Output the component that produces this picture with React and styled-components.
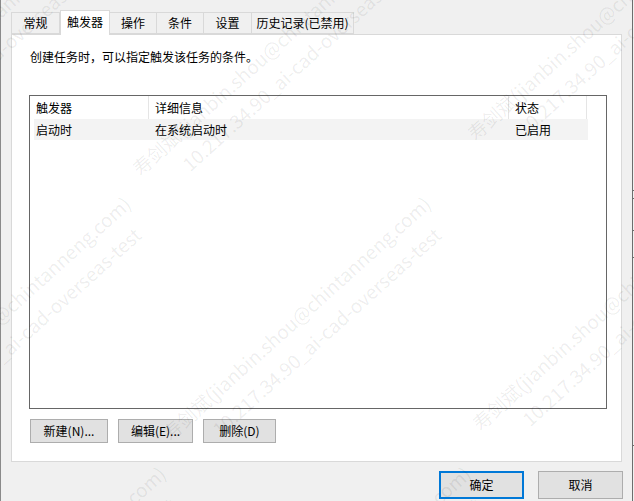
import React from "react";
import styled, { createGlobalStyle } from "styled-components";

const Global = createGlobalStyle`
  html, body { margin: 0; padding: 0; background: #f0f0f0; }
  body { font-family: "Noto Sans CJK SC", "Microsoft YaHei", sans-serif; font-size: 12px; color: #000; }
`;

const Window = styled.div`
  position: relative;
  width: 634px;
  height: 501px;
  overflow: hidden;
  background: #f0f0f0;
  box-sizing: border-box;
  display: grid;
  grid-template-columns: 1px 1fr 1px 1px;
`;

const EdgeLine = styled.div`
  background: ${(p) => p.color || "#7a7a7a"};
`;

const Dialog = styled.div`
  display: flex;
  flex-direction: column;
  padding: 10px 0 0 10px;
  width: 630px;
  box-sizing: border-box;
`;

const TabStrip = styled.div`
  display: flex;
  align-items: flex-end;
  height: 24px;
  position: relative;
  z-index: 2;
`;

const Tab = styled.div`
  width: ${(p) => p.w}px;
  height: ${(p) => (p.active ? 25 : 22)}px;
  margin-bottom: ${(p) => (p.active ? -1 : 0)}px;
  box-sizing: border-box;
  border: 1px solid #d9d9d9;
  border-bottom: ${(p) => (p.active ? "none" : "1px solid #d9d9d9")};
  border-left: ${(p) => (p.first || p.active ? "1px solid #d9d9d9" : "none")};
  background: ${(p) => (p.active ? "#ffffff" : "#f0f0f0")};
  display: flex;
  align-items: center;
  justify-content: center;
  padding-bottom: ${(p) => (p.active ? 3 : 0)}px;
  white-space: nowrap;
  line-height: 1;
`;

const Panel = styled.div`
  width: 611px;
  height: 428px;
  box-sizing: border-box;
  background: #ffffff;
  border: 1px solid #d9d9d9;
  display: flex;
  flex-direction: column;
  padding: 0 0 0 17px;
`;

const Description = styled.div`
  margin-top: 14px;
  height: 16px;
  line-height: 16px;
  margin-left: 1px;
`;

const ListBox = styled.div`
  margin-top: 30px;
  width: 578px;
  height: 314px;
  box-sizing: border-box;
  border: 1px solid #666666;
  display: flex;
  flex-direction: column;
`;

const HeaderRow = styled.div`
  display: grid;
  grid-template-columns: 119px 360px 78px;
  height: 23px;
`;

const HeaderCell = styled.div`
  border-right: 1px solid #e5e5e5;
  padding-left: 6px;
  display: flex;
  align-items: center;
  line-height: 1;
`;

const DataRow = styled.div`
  display: grid;
  grid-template-columns: 115px 360px 79px;
  height: 21px;
  margin-left: 4px;
  width: 554px;
  background: #f3f3f3;
`;

const Cell = styled.div`
  padding-left: 2px;
  display: flex;
  align-items: center;
  line-height: 1;
  &:nth-child(2) { padding-left: 6px; }
  &:nth-child(3) { padding-left: 6px; }
`;

const ButtonRow = styled.div`
  display: flex;
  gap: 10px;
  margin-top: 10px;
  margin-left: 1px;
`;

const Button = styled.div`
  width: ${(p) => p.w}px;
  height: ${(p) => p.h || 24}px;
  box-sizing: border-box;
  background: #e1e1e1;
  border: ${(p) => (p.primary ? "2px solid #0078d7" : "1px solid #adadad")};
  display: flex;
  align-items: center;
  justify-content: center;
  line-height: 1;
  white-space: nowrap;
`;

const Footer = styled.div`
  display: flex;
  justify-content: flex-end;
  gap: 14px;
  margin-top: 9px;
  width: 612px;
`;

const Ticks = styled.div`
  position: relative;
`;

const Tick = styled.div`
  position: absolute;
  left: 0;
  top: ${(p) => p.y}px;
  width: 2px;
  height: 1px;
  background: #6d6d6d;
`;

const Watermark = styled.div`
  position: absolute;
  inset: 0;
  pointer-events: none;
  z-index: 10;
`;

const Mark = styled.div`
  position: absolute;
  left: ${(p) => p.x}px;
  top: ${(p) => p.y}px;
  transform-origin: 0 0;
  transform: rotate(-42deg);
  font-family: "Noto Sans CJK SC", sans-serif;
  font-size: 19px;
  line-height: 30px;
  color: rgba(0, 0, 0, 0.075);
  white-space: nowrap;
`;

const MarkLine = styled.div`
  margin-left: ${(p) => p.indent || 0}px;
`;

const marks = [
  [-190, 160],
  [125, 160],
  [460, 125],
  [-145, 425],
  [155, 425],
  [465, 415],
  [-110, 695],
  [195, 695],
];

export default function App() {
  return (
    <Window>
      <Global />
      <EdgeLine color="#8a8a8a" />
      <Dialog>
        <TabStrip>
          <Tab w={49} first>常规</Tab>
          <Tab w={50} active>触发器</Tab>
          <Tab w={47}>操作</Tab>
          <Tab w={47}>条件</Tab>
          <Tab w={48}>设置</Tab>
          <Tab w={102}>历史记录(已禁用)</Tab>
        </TabStrip>
        <Panel>
          <Description>创建任务时，可以指定触发该任务的条件。</Description>
          <ListBox>
            <HeaderRow>
              <HeaderCell>触发器</HeaderCell>
              <HeaderCell>详细信息</HeaderCell>
              <HeaderCell>状态</HeaderCell>
            </HeaderRow>
            <DataRow>
              <Cell>启动时</Cell>
              <Cell>在系统启动时</Cell>
              <Cell>已启用</Cell>
            </DataRow>
          </ListBox>
          <ButtonRow>
            <Button w={78}>新建(N)...</Button>
            <Button w={75}>编辑(E)...</Button>
            <Button w={73}>删除(D)</Button>
          </ButtonRow>
        </Panel>
        <Footer>
          <Button w={85} h={28} primary>确定</Button>
          <Button w={85} h={28}>取消</Button>
        </Footer>
      </Dialog>
      <EdgeLine color="#6d6d6d" />
      <Ticks>
        <Tick y={190} />
        <Tick y={198} />
        <Tick y={230} />
        <Tick y={257} />
        <Tick y={445} />
      </Ticks>
      <Watermark>
        {marks.map(([x, y], i) => (
          <Mark key={i} x={x} y={y}>
            <MarkLine>寿剑斌(jianbin.shou@chintanneng.com)</MarkLine>
            <MarkLine indent={40}>10.217.34.90_ai-cad-overseas-test</MarkLine>
          </Mark>
        ))}
      </Watermark>
    </Window>
  );
}
